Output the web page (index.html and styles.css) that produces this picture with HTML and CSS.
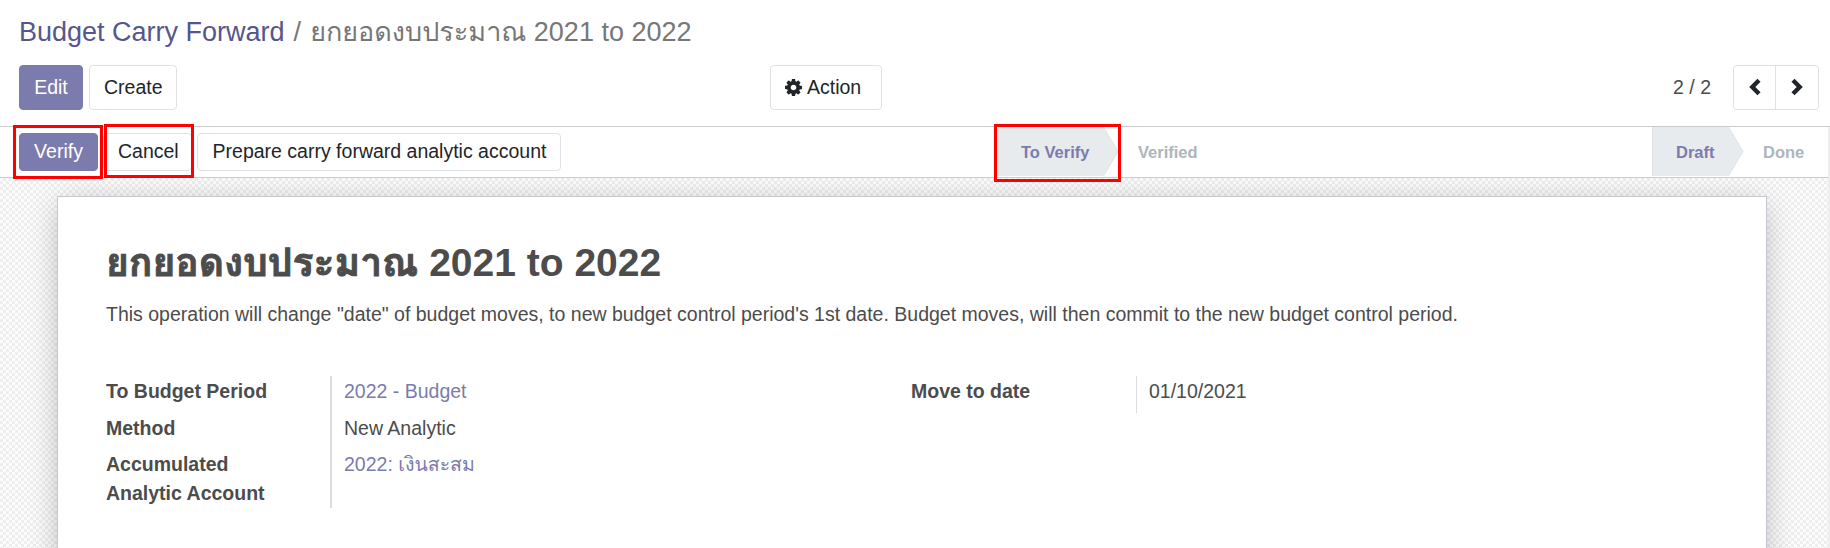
FILE: index.html
```html
<!DOCTYPE html>
<html lang="en">
<head>
<meta charset="utf-8">
<title>Budget Carry Forward</title>
<link rel="stylesheet" href="styles.css">
</head>
<body>
<header class="control-panel">
  <div class="breadcrumb"><a class="crumb-link">Budget Carry Forward</a><span class="crumb-sep">/</span><span>ยกยอดงบประมาณ 2021 to 2022</span></div>
  <div class="toolbar">
    <div class="main-buttons">
      <button class="btn primary edit">Edit</button>
      <button class="btn create">Create</button>
    </div>
    <button class="btn action"><svg class="gear" viewBox="0 0 1536 1536"><path fill-rule="evenodd" d="M1024 768q0-106-75-181t-181-75-181 75-75 181 75 181 181 75 181-75 75-181zm512-109v222q0 12-8 23t-20 13l-185 28q-19 54-39 91 35 50 107 138 10 12 10 25t-9 23q-27 37-99 108t-94 71q-12 0-26-9l-138-108q-44 23-91 38-16 136-29 186-7 28-36 28H657q-14 0-24.500-8.500T621 1506l-28-184q-49-16-90-37l-141 107q-10 9-25 9-14 0-25-11-126-114-165-168-7-10-7-23 0-12 8-23 15-21 51-66.500t54-70.500q-27-50-41-99L29 913q-13-2-21-12.500T0 877V655q0-12 8-23t19-13l186-28q14-46 39-92-40-57-107-138-10-12-10-24 0-10 9-23 26-36 98.500-107.500T337 135q13 0 26 10l138 107q44-23 91-38 16-136 29-186 7-28 36-28h222q14 0 24.500 8.500T915 30l28 184q49 16 90 37l142-107q9-9 24-9 13 0 25 10 129 119 165 170 7 8 7 22 0 12-8 23-15 21-51 66.500t-54 70.500q26 50 41 98l183 28q13 2 21 12.500t8 23.500z"/></svg>Action</button>
    <div class="pager">
      <span>2 / 2</span>
      <div class="pager-buttons">
        <button aria-label="Previous"><svg class="chevron" viewBox="0 0 12 18"><path d="M10 2.200 3.300 9 10 15.800"/></svg></button>
        <button aria-label="Next"><svg class="chevron" viewBox="0 0 12 18"><path d="M2 2.200 8.700 9 2 15.800"/></svg></button>
      </div>
    </div>
  </div>
</header>
<div class="viewport">
  <main class="form-view">
    <div class="statusbar">
      <div class="status-buttons">
        <div class="marked mark-verify"><button class="btn primary">Verify</button></div>
        <div class="marked mark-cancel"><button class="btn cancel">Cancel</button></div>
        <button class="btn prepare">Prepare carry forward analytic account</button>
      </div>
      <div class="steps review marked mark-step">
        <div class="step current first">To Verify<svg class="arrow" viewBox="0 0 16 49"><path class="fill" d="M0 0 15 24.500 0 49z"/><path class="edge" d="M.5 0 15 24.500.5 49"/></svg></div>
        <div class="step">Verified</div>
      </div>
      <div class="steps">
        <div class="step current second">Draft<svg class="arrow" viewBox="0 0 16 49"><path class="fill" d="M0 0 15 24.500 0 49z"/><path class="edge" d="M.5 0 15 24.500.5 49"/></svg></div>
        <div class="step">Done</div>
      </div>
    </div>
    <div class="canvas">
      <section class="sheet">
        <h1><span class="thai" lang="th">ยกยอดงบประมาณ</span> 2021 to 2022</h1>
        <p>This operation will change "date" of budget moves, to new budget control period's 1st date. Budget moves, will then commit to the new budget control period.</p>
        <div class="groups">
          <dl class="group left">
            <dt>To Budget Period</dt><dd class="link">2022 - Budget</dd>
            <dt>Method</dt><dd>New Analytic</dd>
            <dt class="last">Accumulated Analytic Account</dt><dd class="link last">2022: เงินสะสม</dd>
          </dl>
          <dl class="group right">
            <dt>Move to date</dt><dd>01/10/2021</dd>
          </dl>
        </div>
      </section>
    </div>
  </main>
</div>
</body>
</html>
```
FILE: styles.css
```css
*, *::after { box-sizing: border-box; }
body {
  margin: 0;
  height: 548px;
  overflow: hidden;
  display: flex;
  flex-direction: column;
  font: 19.5px/29px "Liberation Sans", Loma, Garuda, Waree, "Noto Sans Thai Looped", "Noto Looped Thai", FreeSans, sans-serif;
  color: #4c4c4c;
  background: #fff;
}
button { font: inherit; margin: 0; }
.control-panel { height: 127px; padding: 12px 11px 0 19px; border-bottom: 1px solid #ccc; }
.breadcrumb { height: 53px; font-size: 27px; line-height: 41px; color: #777; white-space: pre; }
.crumb-link { color: #57568c; }
.crumb-sep { padding: 0 9px; }
.toolbar { display: grid; grid-template-columns: 751px 1fr auto; align-items: start; }
.main-buttons { display: flex; gap: 6px; }
.btn {
  height: 38px;
  padding: 0 14px;
  line-height: 1;
  white-space: nowrap;
  color: #212529;
  background: #fff;
  border: 1px solid #dee2e6;
  border-radius: 4px;
}
.primary { color: #fff; background: #7c7bad; border-color: #7c7bad; }
.toolbar .btn { height: 45px; }
.edit { width: 64px; }
.create { width: 88px; }
.action { width: 112px; display: flex; align-items: center; gap: 5px; }
.gear { width: 17px; height: 17px; flex: none; fill: #212529; }
.pager { display: flex; align-items: center; gap: 22px; }
.pager > span { margin-top: -1px; }
.pager-buttons { display: flex; height: 45px; border: 1px solid #dee2e6; border-radius: 4px; }
.pager-buttons button { width: 41px; padding: 0 0 2px; border: 0; background: none; display: grid; place-items: center; }
.pager-buttons button + button { width: 43px; border-left: 1px solid #dee2e6; }
.chevron { width: 12px; height: 18px; fill: none; stroke: #212529; stroke-width: 4.4; }
.viewport { flex: 1; min-height: 0; padding-right: 2px; background: #eee; }
.form-view { height: 100%; display: flex; flex-direction: column; }
.canvas {
  flex: 1;
  min-height: 0;
  overflow: hidden;
  background-color: #fff;
  background-image: conic-gradient(#eee 25%, #fcfcfc 0 50%, #eee 0 75%, #fcfcfc 0);
  background-size: 6px 6px;
}
.statusbar { flex: none; height: 51px; display: flex; background: #fff; border-bottom: 1px solid #ccc; }
.status-buttons { display: flex; gap: 5px; width: 997px; padding: 6px 0 0 19px; }
.status-buttons .primary { width: 79px; }
.cancel { width: 89px; padding: 0 15px 0 14px; }
.prepare { width: 364px; padding: 0 13px 0 14px; }
.marked { position: relative; z-index: 2; }
.marked::after { content: ""; position: absolute; border: 3px solid #f00; }
.mark-verify::after { left: -6px; top: -8px; width: 90px; height: 54px; }
.mark-cancel::after { left: 1px; top: -9px; width: 90px; height: 54px; }
.mark-step::after { left: -3px; top: -3px; width: 127px; height: 58px; }
.steps { display: flex; height: 49px; font-size: 16.5px; font-weight: 700; line-height: 51px; color: #adb5bd; }
.review { width: 655px; }
.step { position: relative; padding-left: 35px; }
.current { color: #7c7bad; background: #e8ebee; padding-left: 24px; }
.first { width: 106px; }
.second { width: 76px; padding-left: 23px; border-left: 1px solid #dee2e6; }
.arrow { position: absolute; left: 100%; top: 0; width: 16px; height: 49px; }
.fill { fill: #e8ebee; }
.edge { fill: none; stroke: #dee2e6; }
.sheet {
  margin: 18px 61px 0 57px;
  height: 500px;
  padding: 40px 48px 0;
  background: #fff;
  border: 1px solid #c8c8d3;
  box-shadow: 0 5px 30px -5px rgba(0, 0, 0, .3);
}
h1 { margin: 0; font-size: 39px; line-height: 52px; }
.thai { -webkit-text-stroke: 1px #4c4c4c; }
p { margin: 9px 0 0; line-height: 32px; white-space: nowrap; }
.groups { display: flex; padding-top: 46px; }
.group { margin: 0; display: grid; grid-template-columns: 224px 1fr; }
.left { width: 805px; }
.right { width: 805px; align-self: start; grid-template-columns: 225px 1fr; }
dt { font-weight: 700; padding: 1px 50px 6.5px 0; }
dd { margin: 0; padding: 1px 0 6.5px 12px; border-left: 2px solid #ddd; }
.last { padding-bottom: 0; }
.right dd { border-left-width: 1px; }
.link { color: #7c7bad; }
```
